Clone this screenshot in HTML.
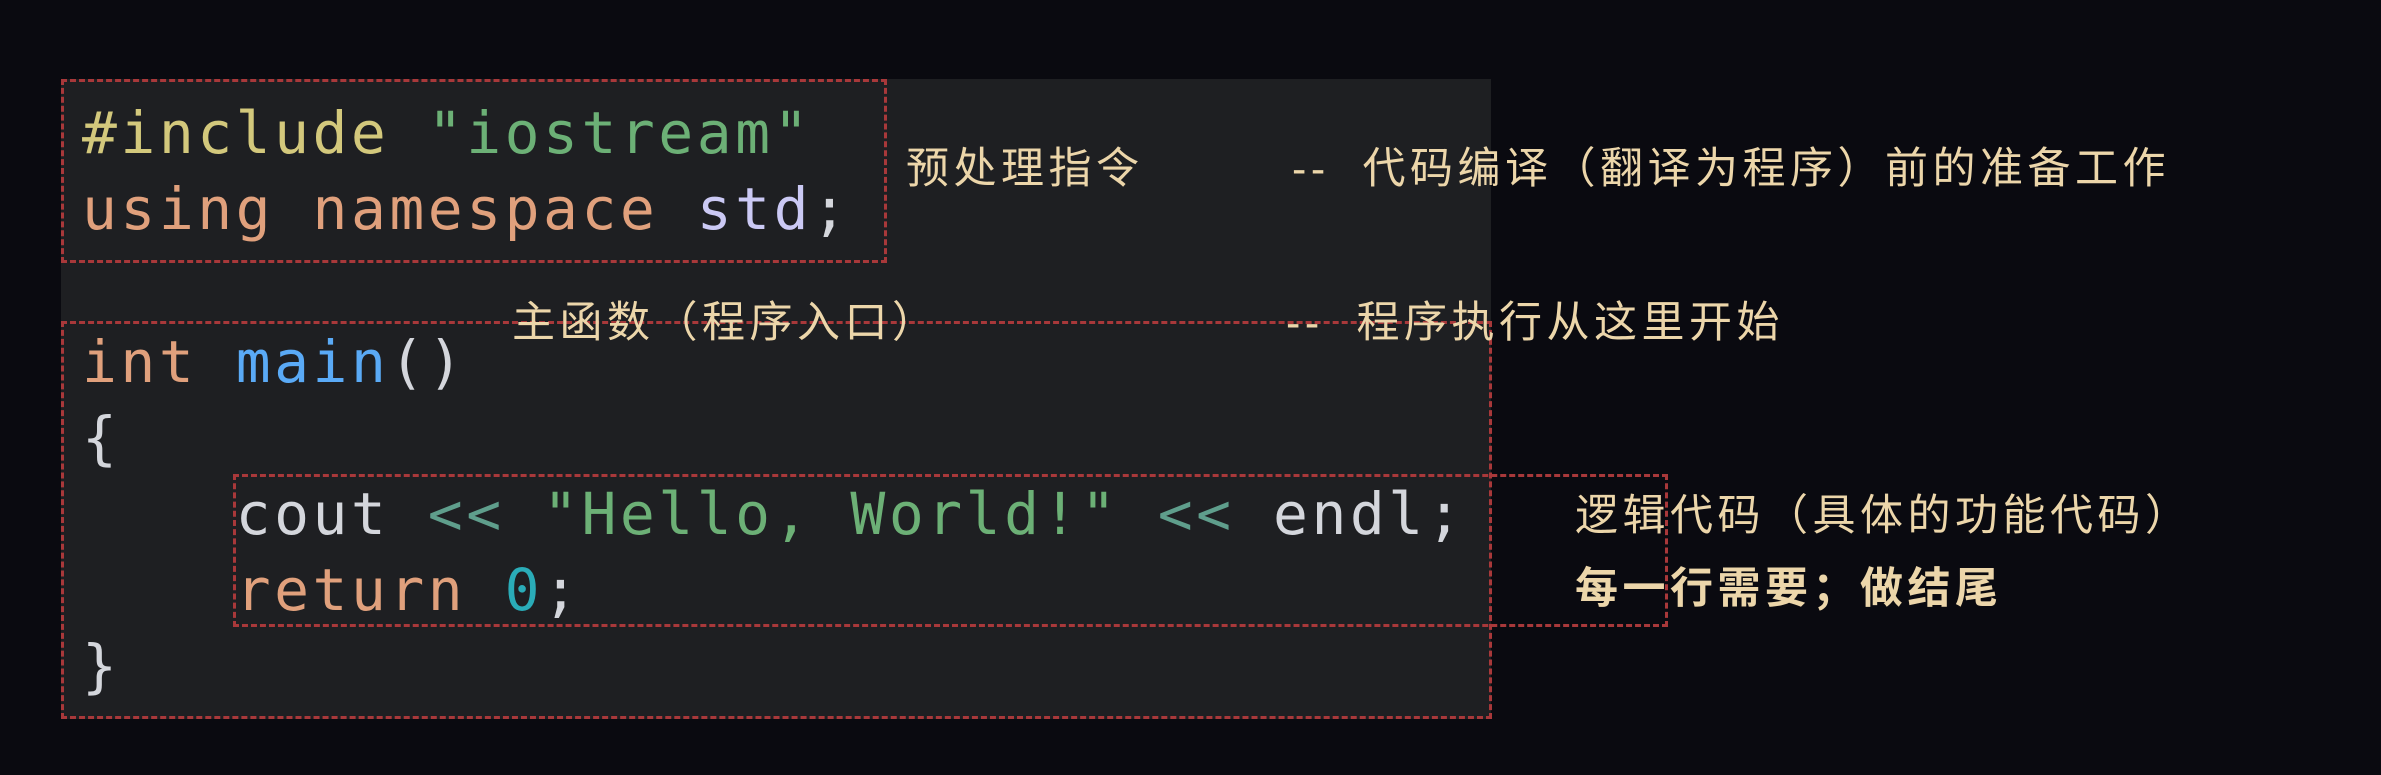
<!DOCTYPE html>
<html><head><meta charset="utf-8"><style>
html,body{margin:0;padding:0;background:#0a0a10;width:2381px;height:775px;overflow:hidden;position:relative}
.panel{position:absolute;left:61px;top:79px;width:1430px;height:640px;background:#1e1f22}
.box{position:absolute;border:3px dashed #a8383a;box-sizing:border-box}
.code{position:absolute;font-family:"DejaVu Sans Mono","Liberation Mono",monospace;font-size:58px;letter-spacing:3.5px;line-height:76px;white-space:pre;color:#d4d6dc}
.a{position:absolute;font-family:"Liberation Sans","Noto Sans CJK SC",sans-serif;font-size:43px;letter-spacing:4.5px;line-height:44px;color:#ecd6aa;white-space:pre}
.kw{color:#e0a07c}.pp{color:#d3c87c}.st{color:#6cb076}.sd{color:#cbc9f4}.fn{color:#5aaaf6}.op{color:#5f9e8c}.nu{color:#2aacb8}
</style></head><body>
<div class="panel"></div>
<div class="box" style="left:61px;top:79px;width:826px;height:184px"></div>
<div class="box" style="left:61px;top:321px;width:1431px;height:398px"></div>
<div class="box" style="left:233px;top:474px;width:1435px;height:153px"></div>
<div class="code" style="left:82px;top:95px"><span class="pp">#include</span> <span class="st">"iostream"</span>
<span class="kw">using</span> <span class="kw">namespace</span> <span class="sd">std</span>;</div>
<div class="code" style="left:82px;top:324px"><span class="kw">int</span> <span class="fn">main</span>()
{
    cout <span class="op">&lt;&lt;</span> <span class="st">"Hello, World!"</span> <span class="op">&lt;&lt;</span> endl;
    <span class="kw">return</span> <span class="nu">0</span>;
}</div>
<div class="a" style="left:906px;top:147px">预处理指令</div>
<div class="a" style="left:1292px;top:147px">--  代码编译（翻译为程序）前的准备工作</div>
<div class="a" style="left:512px;top:301px">主函数（程序入口）</div>
<div class="a" style="left:1286px;top:301px">--  程序执行从这里开始</div>
<div class="a" style="left:1575px;top:494px">逻辑代码（具体的功能代码）</div>
<div class="a" style="left:1575px;top:567px;font-weight:bold">每一行需要；做结尾</div>
</body></html>
